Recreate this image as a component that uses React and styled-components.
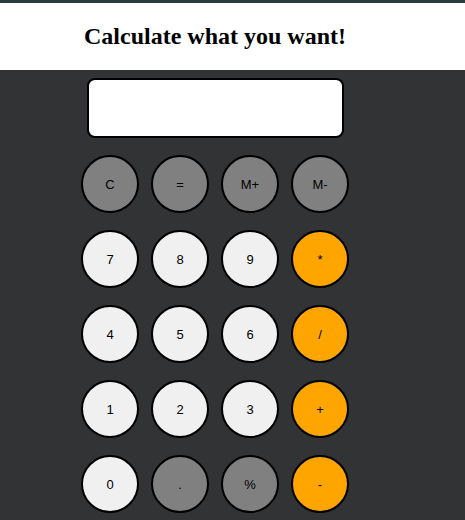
import React from "react";
import styled, { createGlobalStyle } from "styled-components";

const GlobalStyle = createGlobalStyle`
  html, body {
    margin: 0;
    padding: 0;
    background: #323335;
  }
`;

const keys = [
  ["C", "gray"], ["=", "gray"], ["M+", "gray"], ["M-", "gray"],
  ["7", "light"], ["8", "light"], ["9", "light"], ["*", "orange"],
  ["4", "light"], ["5", "light"], ["6", "light"], ["/", "orange"],
  ["1", "light"], ["2", "light"], ["3", "light"], ["+", "orange"],
  ["0", "light"], [".", "gray"], ["%", "gray"], ["-", "orange"],
];

const colors = {
  gray: "#808080",
  light: "#f0f0f0",
  orange: "#ffa500",
};

class App extends React.Component {
  render() {
    return (
      <Page>
        <GlobalStyle />
        <Header>
          <Title>Calculate what you want!</Title>
        </Header>
        <Calculator>
          <Display />
          <Keypad>
            {keys.map(([label, kind]) => (
              <Key key={label} $kind={kind}>
                {label}
              </Key>
            ))}
          </Keypad>
        </Calculator>
      </Page>
    );
  }
}

const Page = styled.div`
  min-height: 520px;
  border-top: 3px solid #283b3d;
  background: #323335;
`;

const Header = styled.header`
  height: 67px;
  background: #ffffff;
  width: 100%;
  display: flex;
  align-items: center;
`;

const Title = styled.h1`
  width: 430px;
  margin: 0;
  padding-bottom: 1px;
  text-align: center;
  font-family: "Liberation Serif", "Times New Roman", serif;
  font-size: 24px;
  font-weight: 700;
  color: #000;
`;

const Calculator = styled.div`
  width: 430px;
  display: flex;
  flex-direction: column;
  align-items: center;
  padding-top: 8px;
`;

const Display = styled.div`
  box-sizing: border-box;
  width: 257px;
  height: 60px;
  background: #ffffff;
  border: 2px solid #000;
  border-radius: 8px;
`;

const Keypad = styled.div`
  display: grid;
  grid-template-columns: repeat(4, 58px);
  column-gap: 12px;
  row-gap: 17px;
  margin-top: 17px;
`;

const Key = styled.button`
  box-sizing: border-box;
  width: 58px;
  height: 58px;
  padding: 0;
  border: 2px solid #000;
  border-radius: 50%;
  background: ${(p) => colors[p.$kind]};
  color: #000;
  font-family: "Liberation Sans", Arial, sans-serif;
  font-size: 13px;
  display: flex;
  align-items: center;
  justify-content: center;
`;

export default App;
